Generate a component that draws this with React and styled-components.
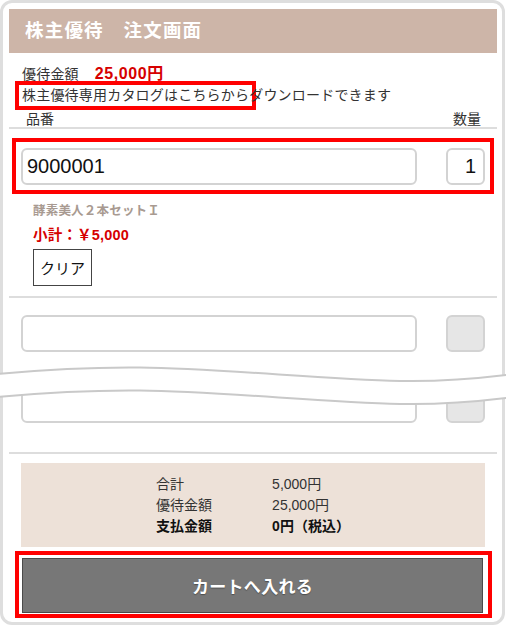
import React from "react";
import styled, { createGlobalStyle } from "styled-components";

const GlobalStyle = createGlobalStyle`
  html, body {
    margin: 0;
    padding: 0;
    background: #fff;
  }
  body {
    font-family: "Liberation Sans", "Noto Sans CJK JP", sans-serif;
    color: #333;
  }
`;

const Page = styled.div`
  position: relative;
  width: 506px;
  height: 626px;
  overflow: hidden;
`;

const Frame = styled.div`
  box-sizing: border-box;
  width: 505px;
  border: 3px solid #dedede;
  border-radius: 12px;
  padding: 6px 5px 9px 6px;
  background: #fff;
`;

const Header = styled.h1`
  margin: 0;
  height: 44px;
  line-height: 44px;
  padding-left: 16px;
  background: #cdb5a8;
  color: #fff;
  font-size: 18.5px;
  font-weight: bold;
  letter-spacing: 1.2px;
`;

const Info = styled.div`
  padding: 10px 0 0 13px;
  font-size: 14px;
  line-height: 21px;
  letter-spacing: 0.2px;
  color: #333;
`;

const AmountLine = styled.div`
  display: flex;
  align-items: baseline;
  gap: 16px;
`;

const Amount = styled.span`
  color: #d60000;
  font-weight: bold;
  font-size: 16px;
  letter-spacing: 0.6px;
`;

// red annotation frame drawn round a part of the page
const Marked = styled.div`
  display: ${(p) => (p.$inline ? "inline-block" : "block")};
  padding: ${(p) => p.$pad.map((v) => v + "px").join(" ")};
  margin: ${(p) => p.$pad.map((v) => -v + "px").join(" ")};
  outline: 4px solid #ff0000;
`;

const LabelRow = styled.div`
  display: flex;
  justify-content: space-between;
  margin-top: 5px;
  padding: 0 16px 0 17px;
  font-size: 14px;
  line-height: 16px;
  color: #333;
  border-bottom: 2px solid #dddddd;
`;

const OrderRow = styled.div`
  padding: ${(p) => p.$top}px 12px ${(p) => p.$bottom}px;
  border-bottom: 2px solid ${(p) => (p.$cut ? "transparent" : "#dddddd")};
`;

const InputLine = styled.div`
  display: flex;
  gap: 29px;
`;

const CodeInput = styled.input`
  flex: 1;
  min-width: 0;
  height: 37px;
  box-sizing: border-box;
  border: 2px solid #d3d3d3;
  border-radius: 6px;
  padding: 0 4px;
  font: 20px "Liberation Sans", sans-serif;
  color: #111;
  background: #fff;
  outline: none;
`;

const QtyInput = styled(CodeInput)`
  flex: none;
  width: 39px;
  padding: 0 7px;
  text-align: right;
  background: ${(p) => (p.$empty ? "#e6e6e6" : "#fff")};
`;

const Details = styled.div`
  margin-top: 14px;
  padding-left: 12px;
`;

const ItemName = styled.div`
  font-size: 12.5px;
  font-weight: bold;
  line-height: 24px;
  letter-spacing: 0.2px;
  color: #a89a91;
`;

const Subtotal = styled.div`
  font-size: 14.5px;
  font-weight: bold;
  line-height: 24px;
  letter-spacing: 0.2px;
  color: #d60000;
`;

const ClearButton = styled.button`
  display: block;
  margin-top: 2px;
  width: 59px;
  height: 37px;
  box-sizing: border-box;
  padding: 0;
  border: 1.5px solid #444;
  background: #fff;
  color: #111;
  font-family: "Liberation Sans", "Noto Sans CJK JP", sans-serif;
  font-size: 15px;
`;

const Summary = styled.div`
  margin: 9px 12px 0;
  padding: 11px 0 10px;
  background: #ede1d8;
  display: grid;
  grid-template-columns: 116px auto;
  justify-content: center;
  font-size: 14px;
  line-height: 21px;
  color: #333;
`;

const SumCell = styled.div`
  font-weight: ${(p) => (p.$bold ? "bold" : "normal")};
  color: ${(p) => (p.$bold ? "#111" : "#333")};
`;

const CartArea = styled.div`
  margin: 11px 14px 0 13px;
`;

const CartButton = styled.button`
  display: block;
  width: 100%;
  height: 55px;
  box-sizing: border-box;
  background: #777;
  border: 1.5px solid #4a4a4a;
  color: #fff;
  font-family: "Liberation Sans", "Noto Sans CJK JP", sans-serif;
  font-size: 17px;
  font-weight: bold;
  letter-spacing: 0.3px;
  text-shadow: 0 1px 1px rgba(0, 0, 0, 0.35);
`;

const Tear = styled.svg`
  position: absolute;
  left: 0;
  top: 360px;
  display: block;
`;

const wave1 = "M-4 14 C40 10, 90 7, 140 7.5 C220 8.5, 320 19, 400 21 C450 22, 490 17, 510 14.5";
const wave2 = "M-4 37 C40 33, 90 30, 140 30.5 C220 31.5, 320 42, 400 44 C450 45, 490 40, 510 37.5";
const gap =
  "M-4 14 C40 10, 90 7, 140 7.5 C220 8.5, 320 19, 400 21 C450 22, 490 17, 510 14.5 " +
  "L510 37.5 C490 40, 450 45, 400 44 C320 42, 220 31.5, 140 30.5 C90 30, 40 33, -4 37 Z";

const summary = [
  ["合計", "5,000円", false],
  ["優待金額", "25,000円", false],
  ["支払金額", "0円（税込）", true],
];

export default function App() {
  return (
    <Page>
      <GlobalStyle />
      <Frame>
        <Header>株主優待　注文画面</Header>
        <Info>
          <AmountLine>
            <span>優待金額</span>
            <Amount>25,000円</Amount>
          </AmountLine>
          <div>
            <Marked $inline $pad={[0, 3, 0, 3]}>
              株主優待専用カタログはこちらから
            </Marked>
            ダウンロードできます
          </div>
        </Info>
        <LabelRow>
          <span>品番</span>
          <span>数量</span>
        </LabelRow>

        <OrderRow $top={19} $bottom={10}>
          <Marked $pad={[6, 5, 5, 5]}>
            <InputLine>
              <CodeInput readOnly value="9000001" />
              <QtyInput readOnly value="1" />
            </InputLine>
          </Marked>
          <Details>
            <ItemName>酵素美人２本セットＩ</ItemName>
            <Subtotal>小計：￥5,000</Subtotal>
            <ClearButton>クリア</ClearButton>
          </Details>
        </OrderRow>

        <OrderRow $top={17} $bottom={14} $cut>
          <InputLine>
            <CodeInput readOnly value="" />
            <QtyInput readOnly value="" $empty />
          </InputLine>
        </OrderRow>

        <OrderRow $top={18} $bottom={29}>
          <InputLine>
            <CodeInput readOnly value="" />
            <QtyInput readOnly value="" $empty />
          </InputLine>
        </OrderRow>

        <Summary>
          {summary.map(([label, value, bold]) => (
            <React.Fragment key={label}>
              <SumCell $bold={bold}>{label}</SumCell>
              <SumCell $bold={bold}>{value}</SumCell>
            </React.Fragment>
          ))}
        </Summary>

        <CartArea>
          <Marked $pad={[3, 5, 1, 3]}>
            <CartButton>カートへ入れる</CartButton>
          </Marked>
        </CartArea>
      </Frame>

      <Tear width="506" height="52" viewBox="0 0 506 52">
        <path d={gap} fill="#fff" />
        <path d={wave1} fill="none" stroke="#c9c9c9" strokeWidth="2" />
        <path d={wave2} fill="none" stroke="#c9c9c9" strokeWidth="2" />
      </Tear>
    </Page>
  );
}
